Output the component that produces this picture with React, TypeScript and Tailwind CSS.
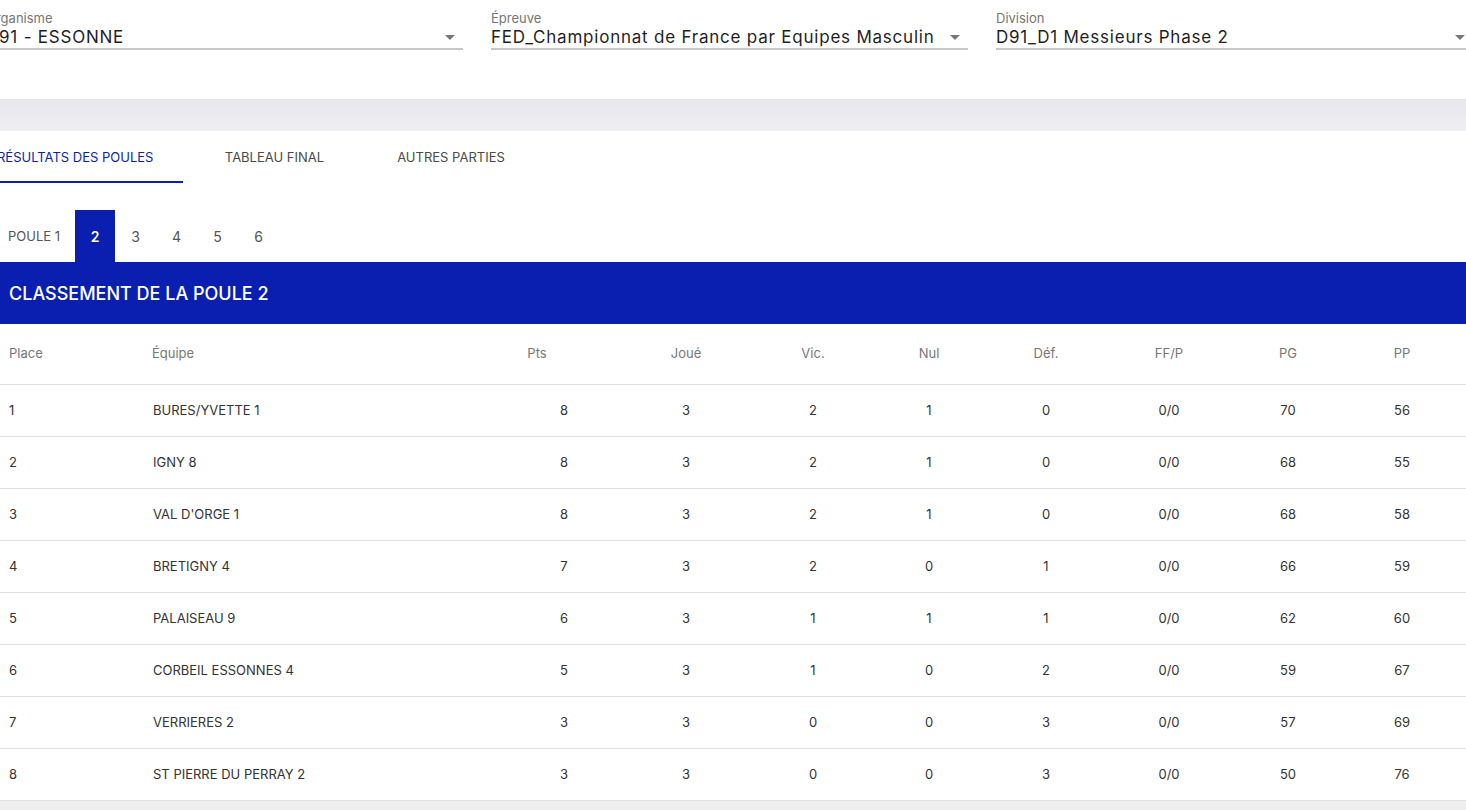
import React from "react";

const rows = [
  ["1", "BURES/YVETTE 1", "8", "3", "2", "1", "0", "0/0", "70", "56"],
  ["2", "IGNY 8", "8", "3", "2", "1", "0", "0/0", "68", "55"],
  ["3", "VAL D'ORGE 1", "8", "3", "2", "1", "0", "0/0", "68", "58"],
  ["4", "BRETIGNY 4", "7", "3", "2", "0", "1", "0/0", "66", "59"],
  ["5", "PALAISEAU 9", "6", "3", "1", "1", "1", "0/0", "62", "60"],
  ["6", "CORBEIL ESSONNES 4", "5", "3", "1", "0", "2", "0/0", "59", "67"],
  ["7", "VERRIERES 2", "3", "3", "0", "0", "3", "0/0", "57", "69"],
  ["8", "ST PIERRE DU PERRAY 2", "3", "3", "0", "0", "3", "0/0", "50", "76"],
];

const headers = ["Place", "Équipe", "Pts", "Joué", "Vic.", "Nul", "Déf.", "FF/P", "PG", "PP"];

const grid = "grid grid-cols-[143px_327px_134px_164px_90px_142px_92px_154px_84px_144px]";

function Select({ label, value }: { label: string; value: string }) {
  return (
    <div className="w-[477px] shrink-0 relative">
      <div className="h-[17px] text-[13px] leading-[17px] text-[#757575]">{label}</div>
      <div className="h-[20px] text-[17px] leading-[20px] tracking-[0.78px] text-[#1f1f1f] whitespace-nowrap">{value}</div>
      <div className="mt-[1px] h-[2px] bg-[#c8c8c8]" />
      <div className="absolute right-[8px] top-[25px] w-0 h-0 border-l-[5px] border-r-[5px] border-t-[5px] border-l-transparent border-r-transparent border-t-[#777]" />
    </div>
  );
}

export default function App() {
  return (
    <div
      className="w-[1466px] h-[810px] overflow-hidden bg-white"
      style={{ fontFamily: "Inter, 'Noto Sans', sans-serif" }}
    >
      <div className="h-[99px] flex gap-[28px] ml-[-14px] pt-[10px]">
        <Select label="Organisme" value="D91 - ESSONNE" />
        <Select label="Épreuve" value="FED_Championnat de France par Equipes Masculin" />
        <Select label="Division" value="D91_D1 Messieurs Phase 2" />
      </div>
      <div className="h-[32px] bg-gradient-to-b from-[#e6e6ec] to-[#efeff3]" />
      <div className="h-[52px] flex text-[13px] uppercase">
        <div className="w-[197px] ml-[-14px] pl-[11px] pt-[3px] flex items-center text-[#0a1fb0] border-b-2 border-[#0a1fb0]">
          RÉSULTATS DES POULES
        </div>
        <div className="w-[183px] pt-[3px] flex items-center justify-center text-[#4a4a4a] border-b-2 border-transparent">TABLEAU FINAL</div>
        <div className="w-[170px] pt-[3px] flex items-center justify-center text-[#4a4a4a] border-b-2 border-transparent">AUTRES PARTIES</div>
      </div>
      <div className="h-[27px]" />
      <div className="h-[52px] flex text-[14px] text-[#555]">
        <div className="w-[75px] pl-[8px] pt-[1px] flex items-center text-[13px]">POULE 1</div>
        <div className="w-[40px] flex items-center justify-center bg-[#0a1fb0] text-white font-semibold">2</div>
        {["3", "4", "5", "6"].map((n) => (
          <div key={n} className="w-[41px] flex items-center justify-center">{n}</div>
        ))}
      </div>
      <div className="h-[62px] bg-[#0a1fb0] flex items-center pl-[9px] text-white text-[18px] font-medium">
        CLASSEMENT DE LA POULE 2
      </div>
      <div className={`${grid} h-[61px] items-center border-b border-[#e0e0e0] text-[13px] text-[#777]`}>
        {headers.map((h, i) => (
          <div key={h} className={i === 0 ? "pl-[9px]" : i === 1 ? "pl-[9px]" : "text-center"}>
            {h}
          </div>
        ))}
      </div>
      {rows.map((r) => (
        <div key={r[0]} className={`${grid} h-[52px] items-center border-b border-[#e0e0e0] text-[13px] text-[#333]`}>
          {r.map((c, i) => (
            <div
              key={i}
              className={
                i === 0 ? "pl-[9px]" : i === 1 ? "pl-[10px]" : i === 2 ? "text-center pl-[54px]" : "text-center"
              }
            >
              {c}
            </div>
          ))}
        </div>
      ))}
      <div className="h-[20px] bg-[#eeeeee]" />
    </div>
  );
}
